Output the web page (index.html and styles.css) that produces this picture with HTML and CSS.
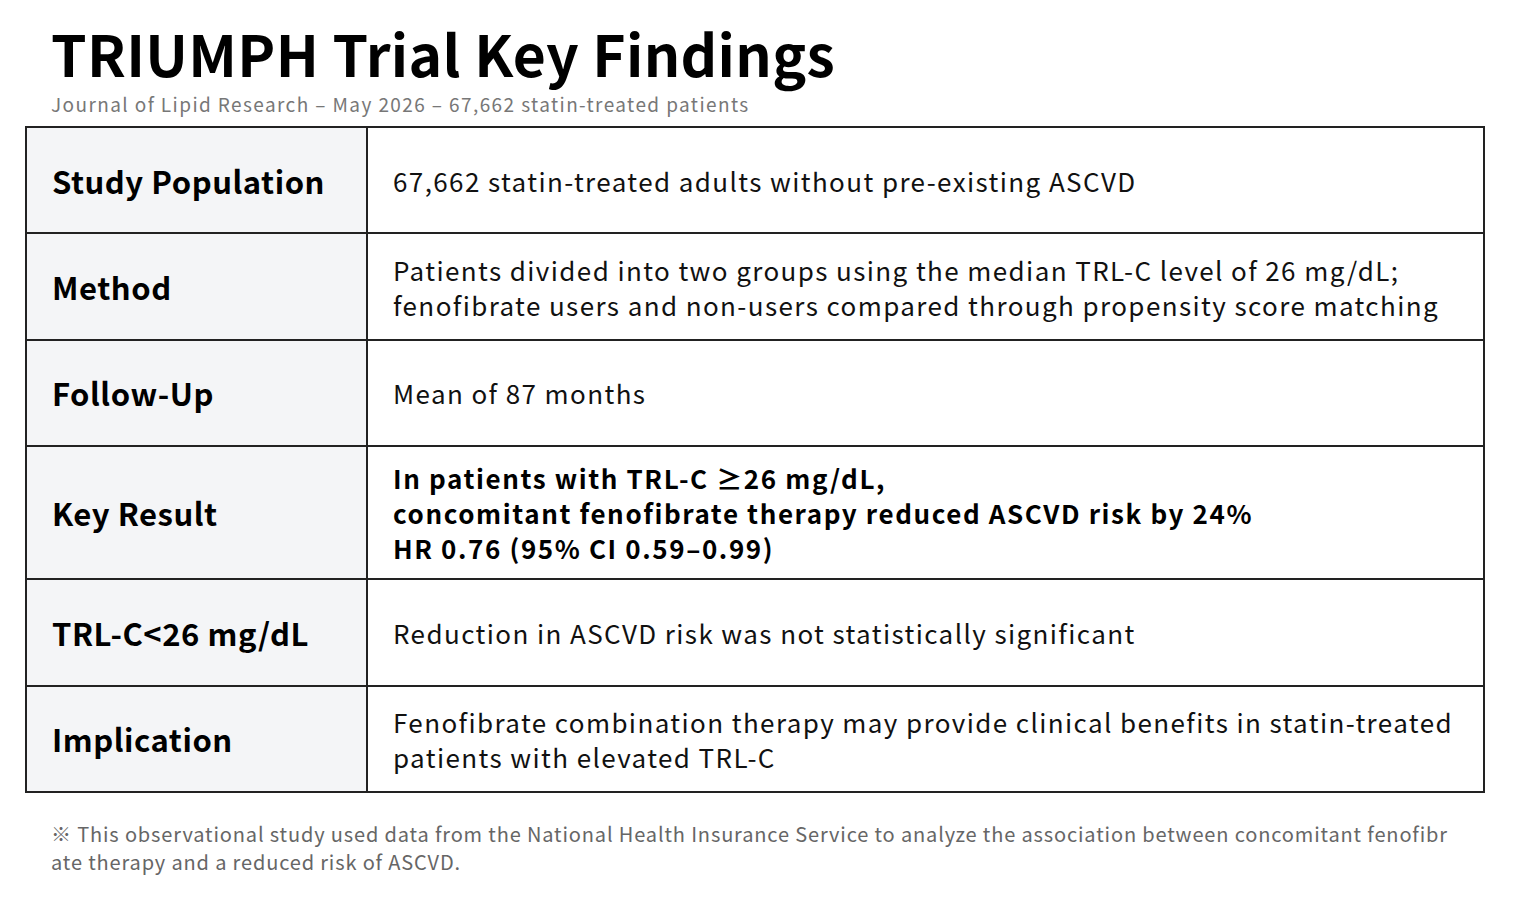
FILE: index.html
```html
<!DOCTYPE html>
<html lang="en">
<head>
<meta charset="utf-8">
<title>TRIUMPH Trial Key Findings</title>
<link rel="stylesheet" href="styles.css">
</head>
<body>
<main class="page">
  <header class="head">
    <h1 class="title">TRIUMPH Trial Key Findings</h1>
    <p class="subtitle">Journal of Lipid Research – May 2026 – 67,662 statin-treated patients</p>
  </header>
  <table class="findings">
    <tr>
      <th>Study Population</th>
      <td>67,662 statin-treated adults without pre-existing ASCVD</td>
    </tr>
    <tr>
      <th>Method</th>
      <td>Patients divided into two groups using the median TRL-C level of 26 mg/dL;<br>fenofibrate users and non-users compared through propensity score matching</td>
    </tr>
    <tr>
      <th>Follow-Up</th>
      <td>Mean of 87 months</td>
    </tr>
    <tr class="tall">
      <th>Key Result</th>
      <td class="strong">In patients with TRL-C ≥26 mg/dL,<br>concomitant fenofibrate therapy reduced ASCVD risk by 24%<br>HR 0.76 (95% CI 0.59–0.99)</td>
    </tr>
    <tr>
      <th>TRL-C&lt;26 mg/dL</th>
      <td>Reduction in ASCVD risk was not statistically significant</td>
    </tr>
    <tr>
      <th>Implication</th>
      <td>Fenofibrate combination therapy may provide clinical benefits in statin-treated<br>patients with elevated TRL-C</td>
    </tr>
  </table>
  <p class="note">※ This observational study used data from the National Health Insurance Service to analyze the association between concomitant fenofibr<br>ate therapy and a reduced risk of ASCVD.</p>
</main>
</body>
</html>
```
FILE: styles.css
```css
html, body {
  margin: 0;
  padding: 0;
  background: #ffffff;
}
body {
  font-family: "Noto Sans CJK KR", "Noto Sans", sans-serif;
  color: #111111;
}
.page {
  width: 1460px;
  padding: 23px 0 0 25px;
}
.head {
  padding-left: 26px;
}
.title {
  margin: 0;
  font-size: 57px;
  font-weight: 700;
  line-height: 58px;
  color: #000;
  letter-spacing: 0.35px;
}
.subtitle {
  margin: 13px 0 0;
  font-size: 19px;
  line-height: 20px;
  color: #777;
  letter-spacing: 1.4px;
}
.findings {
  margin-top: 12px;
  width: 1460px;
  border-collapse: collapse;
  border: 2px solid #222;
}
.findings th, .findings td {
  border: 2px solid #222;
  padding: 13px 24px;
  height: 78.4px;
  vertical-align: middle;
  text-align: left;
}
.findings th {
  width: 290px;
  padding-left: 25px;
  background: #f4f5f7;
  font-size: 31px;
  font-weight: 700;
  color: #000;
  letter-spacing: 0.55px;
}
.findings td {
  padding-left: 25px;
  font-size: 26px;
  line-height: 35px;
  font-weight: 400;
  color: #111;
  letter-spacing: 1.4px;
}
.findings td.strong {
  font-weight: 700;
  color: #000;
  letter-spacing: 1.6px;
}
.findings tr.tall td, .findings tr.tall th {
  height: 104px;
  padding-top: 13px;
  padding-bottom: 13px;
}
.note {
  margin: 27px 0 0 26px;
  width: 1440px;
  font-size: 20px;
  line-height: 28px;
  color: #666;
  letter-spacing: 0.85px;
}
```
